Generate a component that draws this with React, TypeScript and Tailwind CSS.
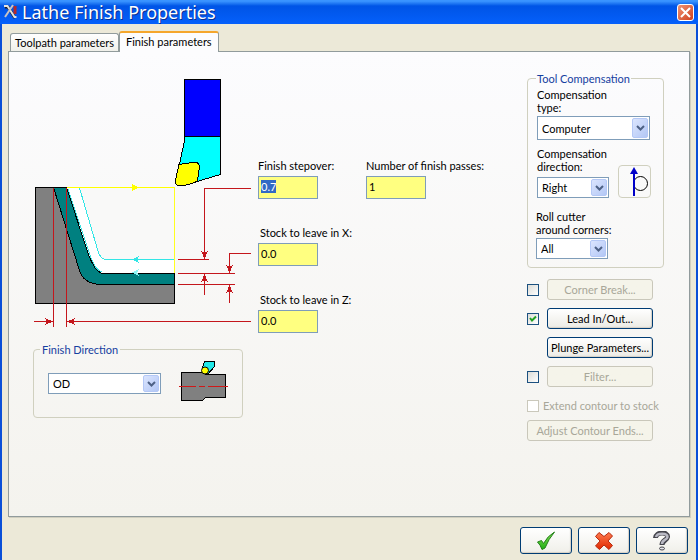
import { useEffect, useRef } from 'react';
import type { ReactNode } from 'react';
import clsx from 'clsx';

type SelectBoxProps = {
    id: string;
    label?: string;
    options: string[];
    className?: string;
};

function SelectBox({ id, label, options, className }: SelectBoxProps) {
    return (
        <div className={clsx('relative', className)}>
            <select
                id={id}
                aria-label={label}
                className="block h-full w-full appearance-none border border-[#7f9db9] bg-white pl-1 pr-5 outline-none"
            >
                {options.map((option) => (
                    <option key={option}>{option}</option>
                ))}
            </select>
            <span className="pointer-events-none absolute inset-y-0.5 right-0.5 flex w-4 items-center justify-center rounded-xs border border-[#b4c8f6] bg-linear-to-br from-[#dbe5fe] to-[#b3c7f5]">
                <svg width="9" height="6" viewBox="0 0 9 6" fill="none">
                    <path d="M1 1l3.5 3.5L8 1" stroke="#4d6185" strokeWidth="2" />
                </svg>
            </span>
        </div>
    );
}

type FieldProps = {
    id: string;
    label: string;
    value: string;
    selected?: boolean;
    indent?: boolean;
};

function NumberField({ id, label, value, selected, indent }: FieldProps) {
    const ref = useRef<HTMLInputElement>(null);

    useEffect(() => {
        if (selected) {
            ref.current?.focus();
            ref.current?.select();
        }
    }, [selected]);

    return (
        <div className="flex flex-col gap-1">
            <label htmlFor={id} className={clsx('whitespace-nowrap', indent && 'pl-0.5')}>
                {label}
            </label>
            <input
                id={id}
                ref={ref}
                type="text"
                defaultValue={value}
                className="h-[23px] w-15 border border-[#7f9db9] bg-[#ffff80] px-0.5 pb-0.5 outline-none selection:bg-[#316ac5] selection:text-white"
            />
        </div>
    );
}

function CheckBox({ id, label, checked, disabled }: { id: string; label?: string; checked?: boolean; disabled?: boolean }) {
    return (
        <span className="relative flex size-3 shrink-0">
            <input
                id={id}
                type="checkbox"
                aria-label={label}
                defaultChecked={checked}
                disabled={disabled}
                className="peer size-3 appearance-none border border-[#1c5180] bg-linear-to-br from-[#dcdcd7] to-white disabled:border-[#cac8bb] disabled:from-white"
            />
            <svg className="pointer-events-none absolute inset-0 hidden peer-checked:block" width="12" height="12" viewBox="0 0 12 12" fill="none">
                <path d="M3 5l2 2.5L9 3.5" stroke="#21a121" strokeWidth="2" />
            </svg>
        </span>
    );
}

function PushButton({ children, disabled, className }: { children: ReactNode; disabled?: boolean; className?: string }) {
    return (
        <button
            type="button"
            disabled={disabled}
            className={clsx(
                'flex h-[21px] items-center justify-center whitespace-nowrap rounded-[3px] border border-[#003c74] bg-linear-to-b from-white to-[#ecebe5] shadow-[inset_-1px_-1px_1px_#d6d0c5] disabled:border-[#c9c7ba] disabled:from-[#f5f4ea] disabled:to-[#f5f4ea] disabled:text-[#a8a799] disabled:shadow-none',
                className,
            )}
        >
            {children}
        </button>
    );
}

function DialogButton({ label, children }: { label: string; children: ReactNode }) {
    return (
        <button
            type="button"
            aria-label={label}
            className="flex h-[27px] w-[52px] items-center justify-center rounded-[3px] border border-[#003c74] bg-linear-to-b from-white to-[#f0efe9] shadow-[inset_-1px_-1px_1px_#d6d0c5]"
        >
            {children}
        </button>
    );
}

function FinishDiagram() {
    return (
        <svg className="shrink-0" width="219" height="250" viewBox="33 78 219 250" fill="none" shapeRendering="crispEdges">
            {/* Stock and finished profile */}
            <rect x="35.5" y="187.5" width="139" height="116" fill="#808080" />
            <path d="M67 187L88 253Q93 271 102 273H175V187Z" fill="#f9f9f8" />
            <path d="M67 187H79.5L98 251Q101 259.5 107 259.5H174.5V273.5H102Q93 272 87 253Z" fill="#fff" />
            <path
                d="M53.5 187.5L79 269Q83 284.5 102 284.5H174.5V273.5H102Q95 271 89 256L66.5 187.5Z"
                fill="#008080"
                stroke="#000"
            />
            <path d="M68 189L90 255Q95 270 102 272" stroke="#40e0e0" />
            <path d="M67 187.5H35.5V303.5H174.5V273" stroke="#000" />

            {/* Toolpath */}
            <path d="M79.5 188L98 251Q100.5 259.5 107 259.5H174" stroke="#33e6e6" />
            <path d="M132 259.5L139 256L137.5 259.5L139 263Z" fill="#33e6e6" />
            <path d="M132 272.5L139 269L137.5 272.5L139 276Z" fill="#8ff5f5" />
            <rect x="67" y="187" width="108" height="1" fill="#ffff00" />
            <rect x="174" y="187" width="1" height="86" fill="#ffff20" />
            <path d="M139 187.5L132 184V191Z" fill="#ffff00" />

            {/* Dimensions */}
            <g stroke="#c4161c">
                <path d="M53.5 188V327M66.5 188V327" />
                <path d="M34 321.5H53M67 321.5H251" />
                <path d="M178 259.5H209M178 273.5H235M178 284.5H235" />
                <path d="M251 188.5H204.5V259M204.5 274V295" />
                <path d="M251 253.5H229.5V273M229.5 285V303" />
            </g>
            <g fill="#c4161c">
                <path d="M53 321.5L45 318L47 321.5L45 325Z" />
                <path d="M67 321.5L75 318L73 321.5L75 325Z" />
                <path d="M204.5 259L201 251L204.5 253L208 251Z" />
                <path d="M204.5 274L201 282L204.5 280L208 282Z" />
                <path d="M229.5 273L226 265L229.5 267L233 265Z" />
                <path d="M229.5 285L226 293L229.5 291L233 293Z" />
            </g>

            {/* Tool */}
            <g stroke="#000">
                <rect x="184.5" y="79.5" width="36" height="57" fill="#0000ff" />
                <path d="M184.5 136.5H220.5V174.5L197 181.5L179.5 164L184.5 141Z" fill="#00ffff" />
                <path
                    d="M179 164.5L193 162.5Q199 161.5 199.5 166.5L197.5 181Q189 186 177.5 185.5Q174.5 184 175.5 180Z"
                    fill="#ffff00"
                />
            </g>
        </svg>
    );
}

function DirectionPreview() {
    return (
        <svg width="51" height="47" viewBox="178 360 51 47" fill="none" shapeRendering="crispEdges">
            <path d="M181.5 372.5H204L206 374.5H225.5V397.5H205.5L202.5 400.5H181.5Z" fill="#808080" stroke="#000" />
            <path d="M179 386.5H196M199 386.5H205M208 386.5H228" stroke="#d01818" />
            <path d="M204.5 361.5H214.5V366.5L208 374L202.5 367.5Z" fill="#20e8e8" stroke="#000" />
            <circle cx="205" cy="370.5" r="3.5" fill="#ffff00" stroke="#000" shapeRendering="auto" />
        </svg>
    );
}

export default function App() {
    return (
        <div className="flex min-h-screen flex-col border-x-2 border-[#0a4fd8] bg-[#ece9d8] font-[Lato,'Liberation_Sans',sans-serif] text-[11px] leading-[13px] text-black">
            {/* Title bar */}
            <header className="-mx-0.5 flex h-6 items-center gap-1 bg-linear-to-b from-[#3a94ff] from-5% via-[#0054e6] via-25% to-[#0560fb] pl-1 pr-1">
                <svg width="14" height="16" viewBox="0 0 14 16" fill="none">
                    <path d="M1 3h3l7 11" stroke="#222" strokeWidth="3" />
                    <path d="M11 2v8" stroke="#b62a2a" strokeWidth="3" />
                    <path d="M0 2h3.5l7 11h2" stroke="#e2e2e2" strokeWidth="2" />
                    <path d="M9 1L1 13" stroke="#c9c4c4" strokeWidth="2" />
                </svg>
                <h1 className="flex-1 font-['Noto_Sans',sans-serif] text-lg leading-6 text-white [text-shadow:1px_1px_0_#0a2f8f]">
                    Lathe Finish Properties
                </h1>
                <button
                    type="button"
                    aria-label="Close"
                    className="flex size-[17px] items-center justify-center rounded-[3px] border border-white bg-linear-to-br from-[#ee9273] to-[#cf3d17]"
                >
                    <svg width="11" height="11" viewBox="0 0 11 11">
                        <path d="M1 1l9 9M10 1l-9 9" stroke="#fff" strokeWidth="2" />
                    </svg>
                </button>
            </header>

            <main className="flex flex-1 flex-col px-1.5 pt-[7px]">
                {/* Tabs */}
                <div role="tablist" className="relative z-10 -mb-px flex items-end pl-0.5">
                    <button
                        type="button"
                        role="tab"
                        aria-selected="false"
                        className="mb-px h-[18px] rounded-t-[3px] border border-b-0 border-[#919b9c] bg-linear-to-b from-white to-[#f0f0ea] px-1"
                    >
                        Toolpath parameters
                    </button>
                    <button
                        type="button"
                        role="tab"
                        aria-selected="true"
                        className="h-[21px] rounded-t-[3px] border-x border-t-2 border-x-[#919b9c] border-t-[#f5a62c] bg-[#fcfcfe] px-1.5 pb-0.5"
                    >
                        Finish parameters
                    </button>
                </div>

                {/* Finish parameters */}
                <section className="flex flex-1 items-start justify-between border border-[#919b9c] bg-linear-to-b from-[#fcfcfe] to-[#f4f3ee] pb-5 pl-6 pr-[25px] pt-5 shadow-[1px_1px_0_#d0cebf]">
                    <div>
                        <div className="flex gap-1.5 pt-1.5">
                            <FinishDiagram />
                            <div className="flex flex-col gap-[27px] pt-[81px]">
                                <div className="grid grid-cols-[108px_auto]">
                                    <NumberField id="stepover" label="Finish stepover:" value="0.7" selected />
                                    <NumberField id="passes" label="Number of finish passes:" value="1" />
                                </div>
                                <NumberField id="stock-x" label="Stock to leave in X:" value="0.0" indent />
                                <NumberField id="stock-z" label="Stock to leave in Z:" value="0.0" indent />
                            </div>
                        </div>

                        <fieldset className="mt-2.5 w-[210px] rounded-[4px] border border-[#d0d0bf] pb-2.5 pl-3.5 pr-[13px] pt-1">
                            <legend className="-ml-2 px-0.5 text-[#1540a0]">Finish Direction</legend>
                            <div className="flex items-center justify-between">
                                <SelectBox id="direction" label="Finish Direction" options={['OD', 'ID', 'Face', 'Back']} className="h-[21px] w-[113px]" />
                                <DirectionPreview />
                            </div>
                        </fieldset>
                    </div>

                    <div className="flex w-[137px] shrink-0 flex-col">
                        <fieldset className="rounded-[4px] border border-[#d0d0bf] px-2 pb-2 pt-[3px]">
                            <legend className="px-px text-[#1540a0]">Tool Compensation</legend>
                            <label htmlFor="comp-type" className="mb-0.5 block pl-px">
                                <span className="block">Compensation</span>
                                <span className="block">type:</span>
                            </label>
                            <SelectBox id="comp-type" options={['Computer', 'Control', 'Wear', 'Off']} className="ml-px h-6 w-[113px]" />
                            <div className="mt-[7px] flex items-end gap-2 pl-px">
                                <div className="w-[73px]">
                                    <label htmlFor="comp-direction" className="mb-1 block">
                                        <span className="block">Compensation</span>
                                        <span className="block">direction:</span>
                                    </label>
                                    <SelectBox id="comp-direction" options={['Right', 'Left']} className="h-[21px] w-[72px]" />
                                </div>
                                <div className="shrink-0 rounded-[4px] border border-[#d0d0bf]">
                                    <svg width="31" height="31" viewBox="0 0 31 31" fill="none">
                                        <circle cx="21.5" cy="17.5" r="7" stroke="#000" />
                                        <path d="M15 5V30" stroke="#0000c8" strokeWidth="2" />
                                        <path d="M15 1L19 8H11Z" fill="#0000c8" />
                                    </svg>
                                </div>
                            </div>
                            <label htmlFor="roll-cutter" className="mb-0.5 mt-3 block whitespace-nowrap">
                                <span className="block">Roll cutter</span>
                                <span className="block">around corners:</span>
                            </label>
                            <SelectBox id="roll-cutter" options={['All', 'Sharp', 'None']} className="h-[21px] w-[72px]" />
                        </fieldset>

                        <div className="mt-[11px] flex flex-col gap-2">
                            <div className="flex items-center gap-2">
                                <CheckBox id="corner-break" label="Corner Break" />
                                <PushButton disabled className="w-[106px]">Corner Break...</PushButton>
                            </div>
                            <div className="flex items-center gap-2">
                                <CheckBox id="lead" label="Lead In/Out" checked />
                                <PushButton className="w-[106px]">Lead In/Out...</PushButton>
                            </div>
                            <PushButton className="ml-5 w-[106px]">Plunge Parameters...</PushButton>
                            <div className="flex items-center gap-2">
                                <CheckBox id="filter" label="Filter" />
                                <PushButton disabled className="w-[106px]">Filter...</PushButton>
                            </div>
                        </div>

                        <div className="mt-3 flex items-center gap-1 text-[#a8a799]">
                            <CheckBox id="extend" disabled />
                            <label htmlFor="extend" className="whitespace-nowrap">Extend contour to stock</label>
                        </div>
                        <PushButton disabled className="mt-2 w-[126px]">Adjust Contour Ends...</PushButton>
                    </div>
                </section>
            </main>

            <footer className="flex justify-end gap-1.5 px-2 pb-1.5 pt-2.5">
                <DialogButton label="OK">
                    <svg width="20" height="20" viewBox="0 0 20 20">
                        <defs>
                            <linearGradient id="ok" x1="0" y1="0" x2="0" y2="1">
                                <stop offset="0" stopColor="#8be05a" />
                                <stop offset="1" stopColor="#1faf12" />
                            </linearGradient>
                        </defs>
                        <path d="M1.5 11L5.5 9.5L7.5 12.5Q11.5 5 18.5 1Q12.5 8 9 17L6 18.5Q4.5 14 1.5 11Z" fill="url(#ok)" stroke="#24801a" />
                    </svg>
                </DialogButton>
                <DialogButton label="Cancel">
                    <svg width="20" height="20" viewBox="0 0 20 20">
                        <defs>
                            <linearGradient id="cancel" x1="0" y1="0" x2="0" y2="1">
                                <stop offset="0" stopColor="#ff7a4d" />
                                <stop offset="1" stopColor="#e02800" />
                            </linearGradient>
                        </defs>
                        <path
                            d="M5 1.5L10 5.5L15 1.5L18.5 5L14 10L18.5 14.5L15 18.5L10 14L5.5 18.5L1.5 15L6 10L1.5 5.5Z"
                            fill="url(#cancel)"
                            stroke="#b52a10"
                            strokeLinejoin="round"
                        />
                    </svg>
                </DialogButton>
                <DialogButton label="Help">
                    <svg width="18" height="20" viewBox="0 0 18 20" fill="none">
                        <path d="M2.5 7C2.5 1 15 0 14.500 6C14 9.5 9 9 9 14" stroke="#44444c" strokeWidth="5" />
                        <path d="M3 6C4 1.5 14.5 1.5 14.5 6C14 9.5 9 8.500 9 13" stroke="#b9b9c4" strokeWidth="2.5" />
                        <ellipse cx="9" cy="17.5" rx="2.5" ry="1.5" fill="#e4e4ea" stroke="#44444c" />
                    </svg>
                </DialogButton>
            </footer>
        </div>
    );
}
